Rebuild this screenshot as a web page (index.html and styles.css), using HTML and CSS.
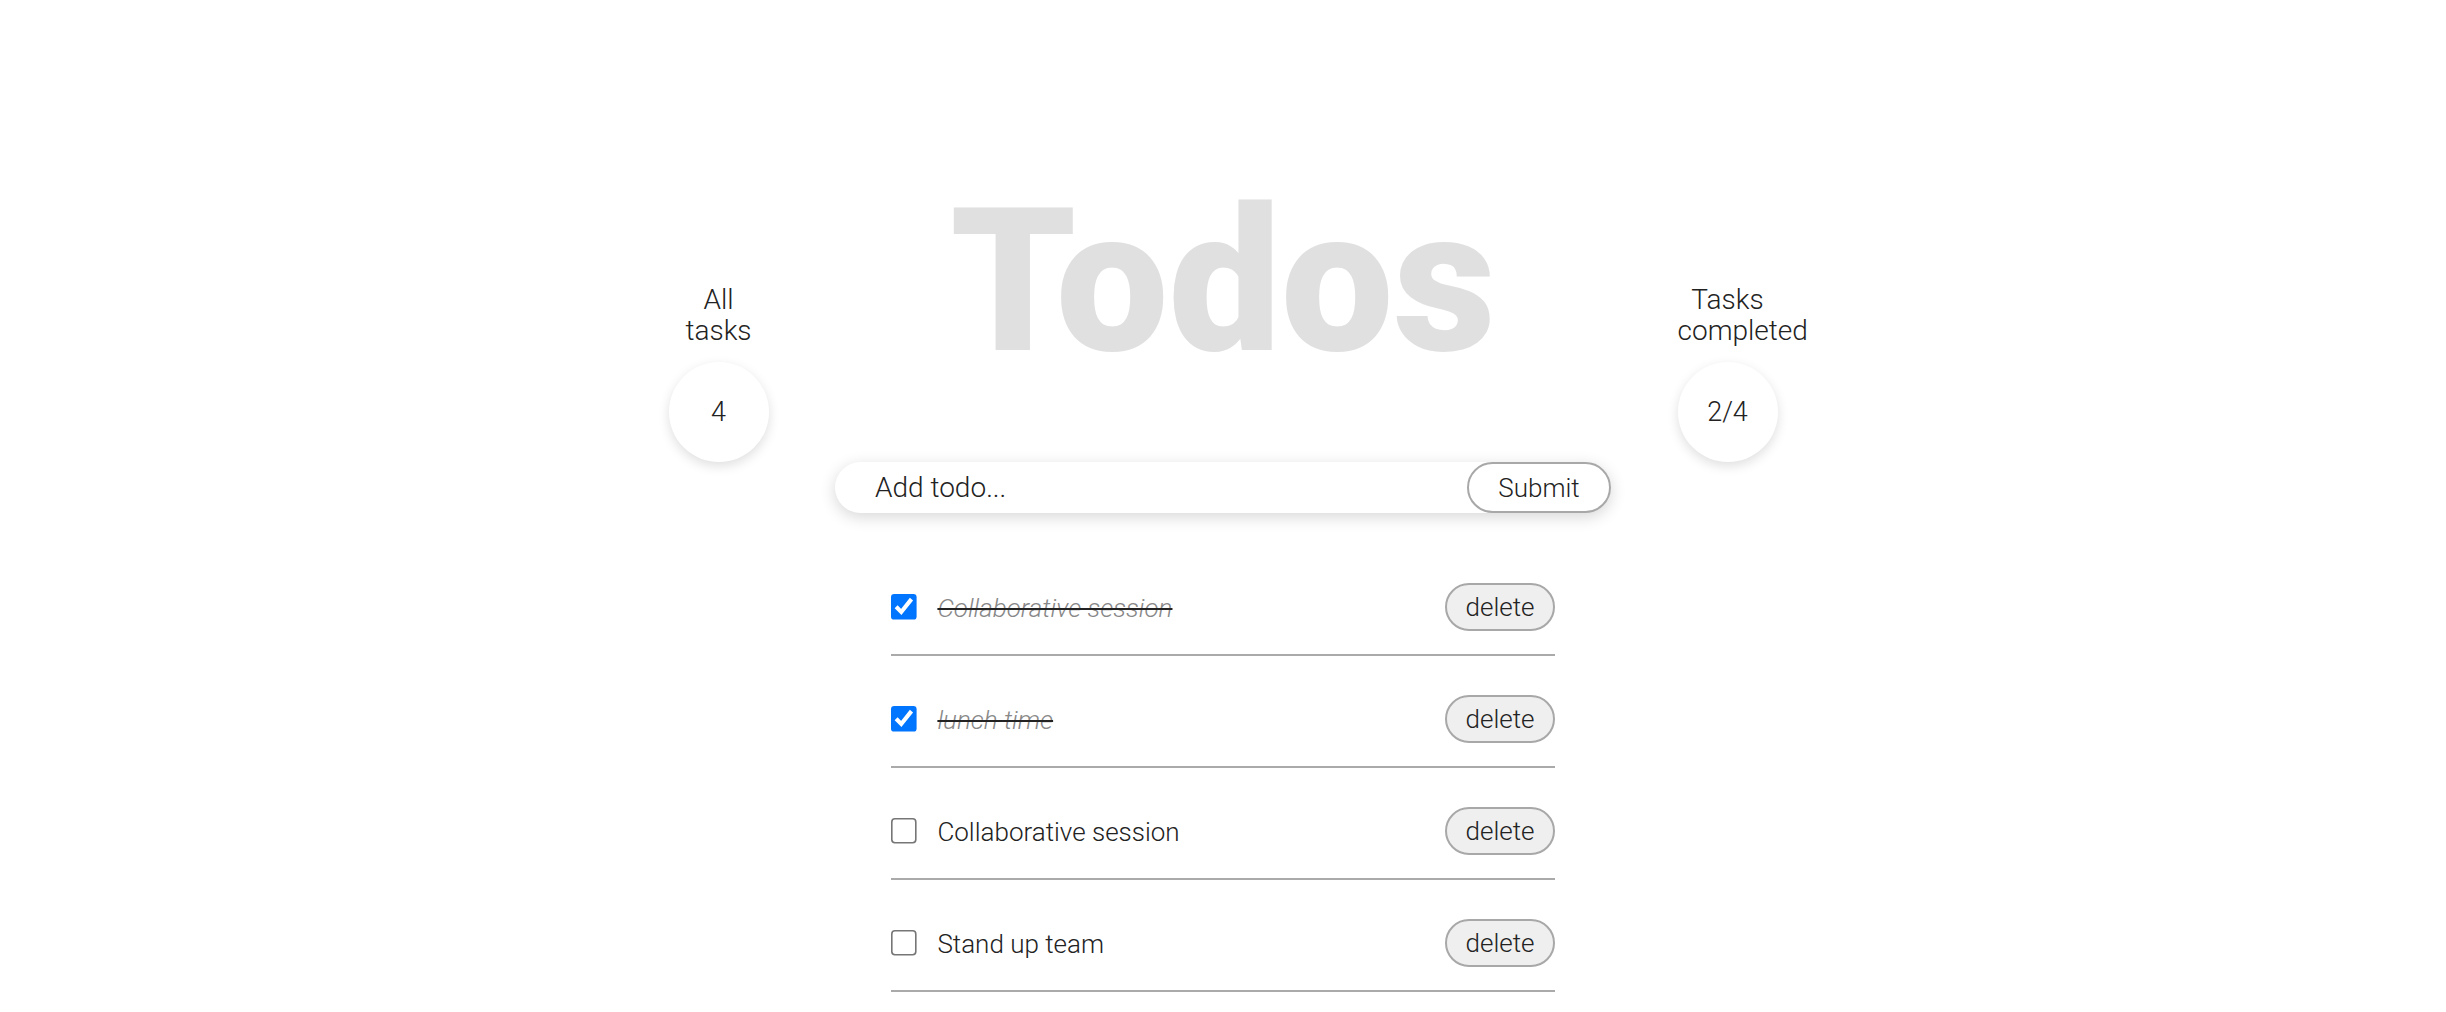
FILE: index.html
```html
<!DOCTYPE html>
<html lang="en">
<head>
<meta charset="utf-8">
<title>Todos</title>
<link rel="stylesheet" href="styles.css">
</head>
<body>
<div class="app">
  <header class="header">
    <div class="stat">
      <div class="stat-label">All tasks</div>
      <div class="circle">4</div>
    </div>
    <h1 class="title">Todos</h1>
    <div class="stat">
      <div class="stat-label">Tasks completed</div>
      <div class="circle">2/4</div>
    </div>
  </header>
  <form class="add-form">
    <input class="add-input" type="text" placeholder="Add todo...">
    <button class="submit-btn" type="button">Submit</button>
  </form>
  <ul class="todo-list">
    <li class="todo">
      <label class="todo-main"><input class="check" type="checkbox" checked><span class="todo-text done">Collaborative session</span></label>
      <button class="delete-btn" type="button">delete</button>
    </li>
    <li class="todo">
      <label class="todo-main"><input class="check" type="checkbox" checked><span class="todo-text done">lunch time</span></label>
      <button class="delete-btn" type="button">delete</button>
    </li>
    <li class="todo">
      <label class="todo-main"><input class="check" type="checkbox"><span class="todo-text">Collaborative session</span></label>
      <button class="delete-btn" type="button">delete</button>
    </li>
    <li class="todo">
      <label class="todo-main"><input class="check" type="checkbox"><span class="todo-text">Stand up team</span></label>
      <button class="delete-btn" type="button">delete</button>
    </li>
  </ul>
</div>
</body>
</html>
```
FILE: styles.css
```css
* { box-sizing: border-box; }
body {
  margin: 0;
  background: #fff;
  font-family: Roboto, "Liberation Sans", sans-serif;
  font-weight: 300;
  color: #222;
}
.app {
  display: flex;
  flex-direction: column;
  align-items: center;
  padding-top: 182px;
}
.header {
  display: flex;
  align-items: flex-end;
  width: 1109px;
}
.stat {
  flex: 0 0 100px;
  width: 100px;
  text-align: center;
  font-size: 28px;
}
.stat-label {
  width: 100px;
  margin-bottom: 16px;
  line-height: 31px;
}
.circle {
  width: 100px;
  height: 100px;
  border-radius: 50%;
  background: #fff;
  box-shadow: 0 4px 12px rgba(0,0,0,0.13);
  display: flex;
  align-items: center;
  justify-content: center;
  font-size: 27px;
}
.title {
  flex: 0 0 909px;
  width: 909px;
  margin: 0 0 80px;
  text-align: center;
  font-size: 200px;
  line-height: 200px;
  font-weight: 900;
  color: #e0e0e0;
}
.add-form {
  width: 776px;
  height: 51px;
  display: flex;
  align-items: stretch;
  border-radius: 26px;
  background: #fff;
  box-shadow: 0 4px 16px rgba(0,0,0,0.16);
}
.add-input {
  flex: 1;
  min-width: 0;
  border: none;
  outline: none;
  background: transparent;
  padding: 0 0 0 40px;
  font-family: inherit;
  font-weight: 300;
  font-size: 28px;
  color: #222;
  border-radius: 26px 0 0 26px;
}
.add-input::placeholder { color: #222; opacity: 1; }
.submit-btn {
  width: 144px;
  border: 2px solid #a8a8a8;
  border-radius: 26px;
  background: #fff;
  font-family: inherit;
  font-weight: 300;
  font-size: 26px;
  color: #222;
  padding: 0;
}
.todo-list {
  list-style: none;
  margin: 31px 0 0;
  padding: 0;
  width: 664px;
}
.todo {
  display: flex;
  align-items: center;
  justify-content: space-between;
  padding: 39px 0 23px;
  border-bottom: 2px solid #aaa;
}
.todo-main {
  display: flex;
  align-items: center;
}
.check {
  width: 16px;
  height: 16px;
  margin: 0 13px 0 0;
  zoom: 1.6;
}
.todo-text {
  font-size: 26px;
  color: #222;
  padding-top: 2px;
}
.todo-text.done {
  font-style: italic;
  color: #888;
  text-decoration: line-through;
  text-decoration-color: #222;
  text-decoration-thickness: 2px;
}
.delete-btn {
  width: 110px;
  height: 48px;
  border: 2px solid #a8a8a8;
  border-radius: 24px;
  background: #efefef;
  font-family: inherit;
  font-weight: 300;
  font-size: 26px;
  color: #222;
  padding: 0;
}
```
